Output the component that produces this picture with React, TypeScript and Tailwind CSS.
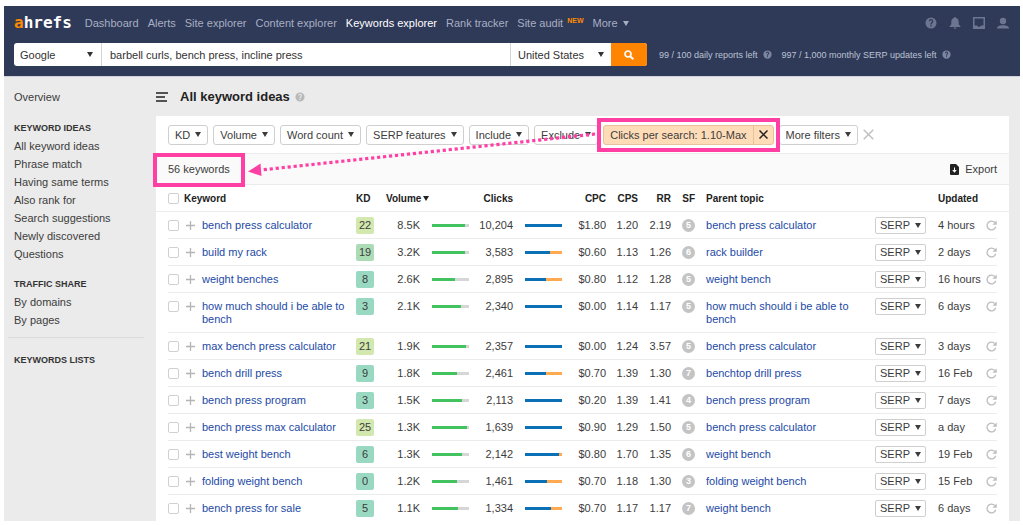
import React from "react";

type Row = {
  keyword: string;
  kd: number;
  volume: string;
  volumeShare: number;
  clicks: string;
  clickShare: number;
  cpc: string;
  cps: string;
  rr: string;
  sf: number;
  parent: string;
  updated: string;
};

const rows: Row[] = [
  { keyword: "bench press calculator", kd: 22, volume: "8.5K", volumeShare: 90, clicks: "10,204", clickShare: 100, cpc: "$1.80", cps: "1.20", rr: "2.19", sf: 5, parent: "bench press calculator", updated: "4 hours" },
  { keyword: "build my rack", kd: 19, volume: "3.2K", volumeShare: 89, clicks: "3,583", clickShare: 67, cpc: "$0.60", cps: "1.13", rr: "1.26", sf: 6, parent: "rack builder", updated: "2 days" },
  { keyword: "weight benches", kd: 8, volume: "2.6K", volumeShare: 62, clicks: "2,895", clickShare: 57, cpc: "$0.80", cps: "1.12", rr: "1.28", sf: 5, parent: "weight bench", updated: "16 hours" },
  { keyword: "how much should i be able to bench", kd: 3, volume: "2.1K", volumeShare: 79, clicks: "2,340", clickShare: 100, cpc: "$0.00", cps: "1.14", rr: "1.17", sf: 5, parent: "how much should i be able to bench", updated: "6 days" },
  { keyword: "max bench press calculator", kd: 21, volume: "1.9K", volumeShare: 93, clicks: "2,357", clickShare: 100, cpc: "$0.00", cps: "1.24", rr: "3.57", sf: 5, parent: "bench press calculator", updated: "3 days" },
  { keyword: "bench drill press", kd: 9, volume: "1.8K", volumeShare: 67, clicks: "2,461", clickShare: 57, cpc: "$0.70", cps: "1.39", rr: "1.30", sf: 7, parent: "benchtop drill press", updated: "16 Feb" },
  { keyword: "bench press program", kd: 3, volume: "1.5K", volumeShare: 81, clicks: "2,113", clickShare: 100, cpc: "$0.20", cps: "1.39", rr: "1.41", sf: 4, parent: "bench press program", updated: "7 days" },
  { keyword: "bench press max calculator", kd: 25, volume: "1.3K", volumeShare: 95, clicks: "1,639", clickShare: 100, cpc: "$0.90", cps: "1.29", rr: "1.50", sf: 5, parent: "bench press calculator", updated: "a day" },
  { keyword: "best weight bench", kd: 6, volume: "1.3K", volumeShare: 81, clicks: "2,142", clickShare: 93, cpc: "$0.80", cps: "1.70", rr: "1.35", sf: 6, parent: "weight bench", updated: "19 Feb" },
  { keyword: "folding weight bench", kd: 0, volume: "1.2K", volumeShare: 67, clicks: "1,461", clickShare: 60, cpc: "$0.70", cps: "1.18", rr: "1.30", sf: 3, parent: "folding weight bench", updated: "15 Feb" },
  { keyword: "bench press for sale", kd: 5, volume: "1.1K", volumeShare: 70, clicks: "1,334", clickShare: 70, cpc: "$0.70", cps: "1.17", rr: "1.17", sf: 7, parent: "weight bench", updated: "6 days" },
];

function kdColor(kd: number) {
  if (kd > 20) return "bg-[#d3e8ae]";
  if (kd > 10) return "bg-[#acdcb6]";
  return "bg-[#9ad9c1]";
}

function Caret({ className = "" }: { className?: string }) {
  return (
    <svg viewBox="0 0 6 5" className={`h-[5px] w-[6px] shrink-0 fill-current ${className}`} aria-hidden="true">
      <path d="M0 0h6L3 5z" />
    </svg>
  );
}

function HelpIcon({ className = "" }: { className?: string }) {
  return (
    <svg viewBox="0 0 24 24" className={`shrink-0 fill-current ${className}`} aria-hidden="true">
      <path d="M12 1a11 11 0 1 0 0 22 11 11 0 0 0 0-22zm1.3 18h-2.6v-2.6h2.6V19zm2.4-8.2-1 1.1c-.9.9-1.4 1.6-1.4 3.2h-2.6v-.6c0-1.200.5-2.300 1.300-3.100l1.400-1.400c.4-.4.600-.9.600-1.500a2 2 0 0 0-4 0H7.500a4.500 4.500 0 0 1 9 0c0 .9-.300 1.700-.8 2.300z" />
    </svg>
  );
}

function RefreshIcon() {
  return (
    <svg viewBox="0 0 11 11" className="size-[11px]" aria-hidden="true">
      <path d="M9.700 6.800A4.400 4.400 0 1 1 8.700 2.500" fill="none" stroke="currentColor" strokeWidth="1.300" />
      <path d="M10.700.5v4.200H6.500z" fill="currentColor" />
    </svg>
  );
}

function Filter({ label }: { label: string }) {
  return (
    <button type="button" className="flex h-5 shrink-0 items-center gap-[5px] rounded-[3px] border border-[#cfcfcf] bg-white px-[6px] whitespace-nowrap">
      {label}
      <Caret />
    </button>
  );
}

function SideHeading({ children }: { children: React.ReactNode }) {
  return <h2 className="text-[9px] leading-3 font-bold text-[#333]">{children}</h2>;
}

function SideLinks({ items }: { items: string[] }) {
  return (
    <ul>
      {items.map((item) => (
        <li key={item} className="h-[18px] leading-[18px]">
          <a href="#">{item}</a>
        </li>
      ))}
    </ul>
  );
}

function Header() {
  return (
    <header className="border-b border-[#cfd1df] bg-[#2f3a59] text-[#a8afc2]">
      <div className="flex h-[34px] items-center pr-[11px] pl-[10px]">
        <a href="#" className="mr-[13px] font-['DejaVu_Sans_Mono','Liberation_Mono',monospace] text-base leading-5 font-bold text-white">
          <span className="text-[#ff8a00]">a</span>hrefs
        </a>
        <nav className="flex flex-1 items-center gap-[9px] whitespace-nowrap">
          <a href="#">Dashboard</a>
          <a href="#">Alerts</a>
          <a href="#">Site explorer</a>
          <a href="#">Content explorer</a>
          <a href="#" className="text-white">Keywords explorer</a>
          <a href="#">Rank tracker</a>
          <a href="#" className="flex items-start gap-1">
            Site audit
            <span className="text-[7px] leading-[9px] font-bold text-[#ff8a00]">NEW</span>
          </a>
          <button type="button" className="flex items-center gap-[5px]">
            More
            <Caret />
          </button>
        </nav>
        <div className="flex items-center gap-3 text-[#6d7690]">
          <button type="button" aria-label="Help"><HelpIcon className="size-3" /></button>
          <button type="button" aria-label="Notifications">
            <svg viewBox="0 0 12 12" className="size-3 fill-current" aria-hidden="true">
              <path d="M6 0a1 1 0 0 1 1 1c1.700.500 2.700 1.900 2.700 3.700v2.600L11.500 9.500v.5H.5v-.5l1.800-2.200V4.700C2.300 2.900 3.300 1.500 5 1a1 1 0 0 1 1-1zM4.700 10.600h2.600a1.300 1.300 0 0 1-2.600 0z" />
            </svg>
          </button>
          <button type="button" aria-label="Inbox">
            <svg viewBox="0 0 12 12" className="size-3 fill-current" aria-hidden="true">
              <path fillRule="evenodd" d="M0 0h12v12H0zM1.500 1.500v7H4l1 1.300h2l1-1.300h2.500v-7z" />
            </svg>
          </button>
          <button type="button" aria-label="Account">
            <svg viewBox="0 0 12 12" className="size-3 fill-current" aria-hidden="true">
              <circle cx="6" cy="4" r="3.200" />
              <path d="M0 11.500C0 9.300 2.500 8.300 6 8.300s6 1 6 3.200z" />
            </svg>
          </button>
        </div>
      </div>
      <div className="flex items-center gap-3 pt-[3px] pr-[11px] pb-[10px] pl-[10px]">
        <form className="flex h-[23px] max-w-[633px] flex-1 overflow-hidden rounded-[3px] bg-white text-[#333]">
          <div className="relative flex w-[88px] items-center border-r border-[#d5d5d5]">
            <select aria-label="Search engine" className="h-full w-full appearance-none bg-transparent pl-[6px]">
              <option>Google</option>
            </select>
            <Caret className="pointer-events-none absolute right-2" />
          </div>
          <input aria-label="Keywords" defaultValue="barbell curls, bench press, incline press" className="min-w-0 flex-1 px-2 outline-none" />
          <div className="relative flex w-[101px] items-center border-l border-[#d5d5d5]">
            <select aria-label="Country" className="h-full w-full appearance-none bg-transparent pl-[7px]">
              <option>United States</option>
            </select>
            <Caret className="pointer-events-none absolute right-[7px]" />
          </div>
          <button type="submit" aria-label="Search" className="flex w-9 items-center justify-center bg-[#ff8400] text-white">
            <svg viewBox="0 0 10 10" className="size-[10px]" fill="none" stroke="currentColor" aria-hidden="true">
              <circle cx="4" cy="4" r="3" strokeWidth="1.700" />
              <path d="M6.200 6.200 9.300 9.300" strokeWidth="2" />
            </svg>
          </button>
        </form>
        <div className="flex items-center gap-[10px] text-[9px] whitespace-nowrap text-[#bcc2d1]">
          <span className="flex items-center gap-[5px]">
            99 / 100 daily reports left
            <HelpIcon className="size-[9px] text-[#7d86a0]" />
          </span>
          <span className="flex items-center gap-[5px]">
            997 / 1,000 monthly SERP updates left
            <HelpIcon className="size-[9px] text-[#7d86a0]" />
          </span>
        </div>
      </div>
    </header>
  );
}

function Sidebar() {
  return (
    <aside className="w-[152px] shrink-0 pt-[11px]">
      <div className="pl-[10px]">
        <SideLinks items={["Overview"]} />
        <div className="h-4" />
        <SideHeading>KEYWORD IDEAS</SideHeading>
        <div className="h-[3px]" />
        <SideLinks
          items={["All keyword ideas", "Phrase match", "Having same terms", "Also rank for", "Search suggestions", "Newly discovered", "Questions"]}
        />
        <div className="h-[15px]" />
        <SideHeading>TRAFFIC SHARE</SideHeading>
        <div className="h-[3px]" />
        <SideLinks items={["By domains", "By pages"]} />
      </div>
      <hr className="mt-2 mr-3 mb-4 ml-1 border-[#dadada]" />
      <div className="pl-[10px]">
        <SideHeading>KEYWORDS LISTS</SideHeading>
      </div>
    </aside>
  );
}

function Check({ label }: { label: string }) {
  return <input type="checkbox" aria-label={label} className="block size-[11px] appearance-none rounded-[2px] border border-[#d0d0d0] bg-white" />;
}

function KeywordTable() {
  const line = "border-b border-[#ececec]";
  return (
    <table className="w-full table-fixed border-separate border-spacing-0 leading-[13px]">
      <colgroup>
        <col className="w-3" />
        <col className="w-4" />
        <col className="w-[172px]" />
        <col className="w-[18px]" />
        <col className="w-[46px]" />
        <col className="w-[50px]" />
        <col className="w-[43px]" />
        <col className="w-[50px]" />
        <col className="w-[43px]" />
        <col className="w-8" />
        <col className="w-[33px]" />
        <col className="w-6" />
        <col />
        <col className="w-[63px]" />
        <col className="w-[60px]" />
        <col className="w-[11px]" />
        <col className="w-3" />
      </colgroup>
      <thead>
        <tr className="h-[27px] text-left text-[10px] text-[#222] [&>*]:border-b [&>*]:border-[#ececec] [&>*]:p-0">
          <td />
          <td><Check label="Select all keywords" /></td>
          <th>Keyword</th>
          <th>KD</th>
          <th colSpan={2}>
            <span className="flex items-center gap-[2px] pl-3">
              Volume <Caret />
            </span>
          </th>
          <th className="text-right">Clicks</th>
          <td />
          <th className="text-right">CPC</th>
          <th className="text-right">CPS</th>
          <th className="text-right">RR</th>
          <th className="text-right">SF</th>
          <th><span className="pl-[11px]">Parent topic</span></th>
          <td />
          <th><span className="pl-3">Updated</span></th>
          <td />
          <td />
        </tr>
      </thead>
      <tbody className="align-top">
        {rows.map((row, i) => {
          const cell = `p-0 pt-[7px] pb-[6px] ${i < rows.length - 1 ? line : ""}`;
          const num = `${cell} text-right`;
          return (
            <tr key={row.keyword}>
              <td className="p-0" />
              <td className={cell}>
                <div className="flex h-[13px] items-center"><Check label={`Select ${row.keyword}`} /></div>
              </td>
              <td className={cell}>
                <div className="flex">
                  <button type="button" aria-label={`Add ${row.keyword}`} className="flex h-[13px] w-[18px] shrink-0 items-center pl-[2px] text-[#b5b5b5]">
                    <svg viewBox="0 0 9 9" className="size-[9px]" stroke="currentColor" strokeWidth="1.300" aria-hidden="true">
                      <path d="M4.500 0v9M0 4.500h9" />
                    </svg>
                  </button>
                  <a href="#" className="text-[#1d4aa6]">{row.keyword}</a>
                </div>
              </td>
              <td className={cell}>
                <div className={`-my-[2px] rounded-[2px] py-[2px] text-center ${kdColor(row.kd)}`}>{row.kd}</div>
              </td>
              <td className={num}>{row.volume}</td>
              <td className={cell}>
                <div className="flex h-[13px] items-center pl-3">
                  <div className="h-[3px] w-[37px] bg-[#d4d6d7]">
                    <div className="h-full bg-[#42c35f]" style={{ width: `${row.volumeShare}%` }} />
                  </div>
                </div>
              </td>
              <td className={num}>{row.clicks}</td>
              <td className={cell}>
                <div className="flex h-[13px] items-center pl-3">
                  <div className="h-[3px] w-[37px] bg-[#ffa950]">
                    <div className="h-full bg-[#0b70b5]" style={{ width: `${row.clickShare}%` }} />
                  </div>
                </div>
              </td>
              <td className={num}>{row.cpc}</td>
              <td className={num}>{row.cps}</td>
              <td className={num}>{row.rr}</td>
              <td className={cell}>
                <span className="ml-auto flex size-[13px] items-center justify-center rounded-full bg-[#c4c4c4] text-[9px] font-bold text-white">{row.sf}</span>
              </td>
              <td className={cell}>
                <a href="#" className="block pl-[11px] text-[#1d4aa6]">{row.parent}</a>
              </td>
              <td className={cell}>
                <button type="button" className="-my-[2px] ml-auto flex h-[17px] w-[51px] items-center justify-center gap-[5px] rounded-[2px] border border-[#cfcfcf] bg-white">
                  SERP <Caret />
                </button>
              </td>
              <td className={cell}><span className="block pl-3 whitespace-nowrap">{row.updated}</span></td>
              <td className={cell}>
                <button type="button" aria-label={`Refresh ${row.keyword}`} className="flex h-[13px] items-center text-[#bdbdbd]">
                  <RefreshIcon />
                </button>
              </td>
              <td className="p-0" />
            </tr>
          );
        })}
      </tbody>
    </table>
  );
}

function ArrowCallout() {
  return (
    <svg viewBox="0 0 350 60" className="pointer-events-none absolute top-0 left-[92px] h-[60px] w-[350px]" aria-hidden="true">
      <path d="M347 18 L13 54" fill="none" stroke="#ff3fa4" strokeWidth="3.200" strokeDasharray="3.200 2.800" />
      <path d="M0 55.500 12.500 47.500 13.500 60z" fill="#ff3fa4" />
    </svg>
  );
}

export default function App() {
  return (
    <div className="flex min-h-screen flex-col bg-white pt-[6px] pr-[3px] pb-1 pl-1 font-['Liberation_Sans',Arial,sans-serif] text-[11px] leading-[14px] text-[#3c3c3c]">
      <Header />
      <div className="flex flex-1 bg-[#ebebeb]">
        <Sidebar />
        <main className="flex min-w-0 flex-1 flex-col pr-[11px]">
          <div className="flex h-[39px] items-center">
            <button type="button" aria-label="Toggle sidebar" className="mr-3">
              <svg viewBox="0 0 12 10" className="h-[10px] w-3" stroke="#222" strokeWidth="1.500" aria-hidden="true">
                <path d="M0 1h12M0 5h9M0 9h11" />
              </svg>
            </button>
            <h1 className="text-[13px] leading-4 font-bold text-[#222]">All keyword ideas</h1>
            <HelpIcon className="ml-[5px] size-[10px] text-[#b9b9b9]" />
          </div>
          <section className="relative flex-1 bg-white">
            <div className="flex h-[38px] items-center gap-[5px] border-b border-[#ececec] px-3">
              <Filter label="KD" />
              <Filter label="Volume" />
              <Filter label="Word count" />
              <Filter label="SERP features" />
              <Filter label="Include" />
              <Filter label="Exclude" />
              <div className="relative flex h-5 shrink-0 items-stretch rounded-[3px] border border-[#e6c19c] bg-[#ffdcb8] whitespace-nowrap">
                <button type="button" className="px-[6px]">Clicks per search: 1.10-Max</button>
                <button type="button" aria-label="Remove clicks per search filter" className="flex w-5 items-center justify-center border-l border-[#e6c19c]">
                  <svg viewBox="0 0 9 9" className="size-[9px]" stroke="#222" strokeWidth="1.500" aria-hidden="true">
                    <path d="M.5.5l8 8M8.500.5l-8 8" />
                  </svg>
                </button>
                <div className="pointer-events-none absolute -inset-x-[7px] -inset-y-2 z-10 border-4 border-[#ff3fa4]" />
              </div>
              <Filter label="More filters" />
              <button type="button" aria-label="Clear all filters">
                <svg viewBox="0 0 11 11" className="size-[11px]" stroke="#c0c0c0" strokeWidth="1.500" aria-hidden="true">
                  <path d="M.7.7l9.600 9.600M10.300.7.7 10.300" />
                </svg>
              </button>
            </div>
            <div className="flex h-[31px] items-center justify-between border-b border-[#ececec] bg-[#fafafa] px-3">
              <span className="relative">
                56 keywords
                <span className="pointer-events-none absolute -inset-x-[15px] -top-[9px] -bottom-[11px] border-4 border-[#ff3fa4]" />
              </span>
              <button type="button" className="flex items-center gap-[6px]">
                <svg viewBox="0 0 9 11" className="h-[11px] w-[9px]" aria-hidden="true">
                  <path d="M1 0h5l3 3v7a1 1 0 0 1-1 1H1a1 1 0 0 1-1-1V1a1 1 0 0 1 1-1z" fill="#222" />
                  <path d="M4 3.500h1V6h1.800L4.500 8.700 2.200 6H4z" fill="#fff" />
                </svg>
                Export
              </button>
            </div>
            <KeywordTable />
            <ArrowCallout />
          </section>
        </main>
      </div>
    </div>
  );
}
